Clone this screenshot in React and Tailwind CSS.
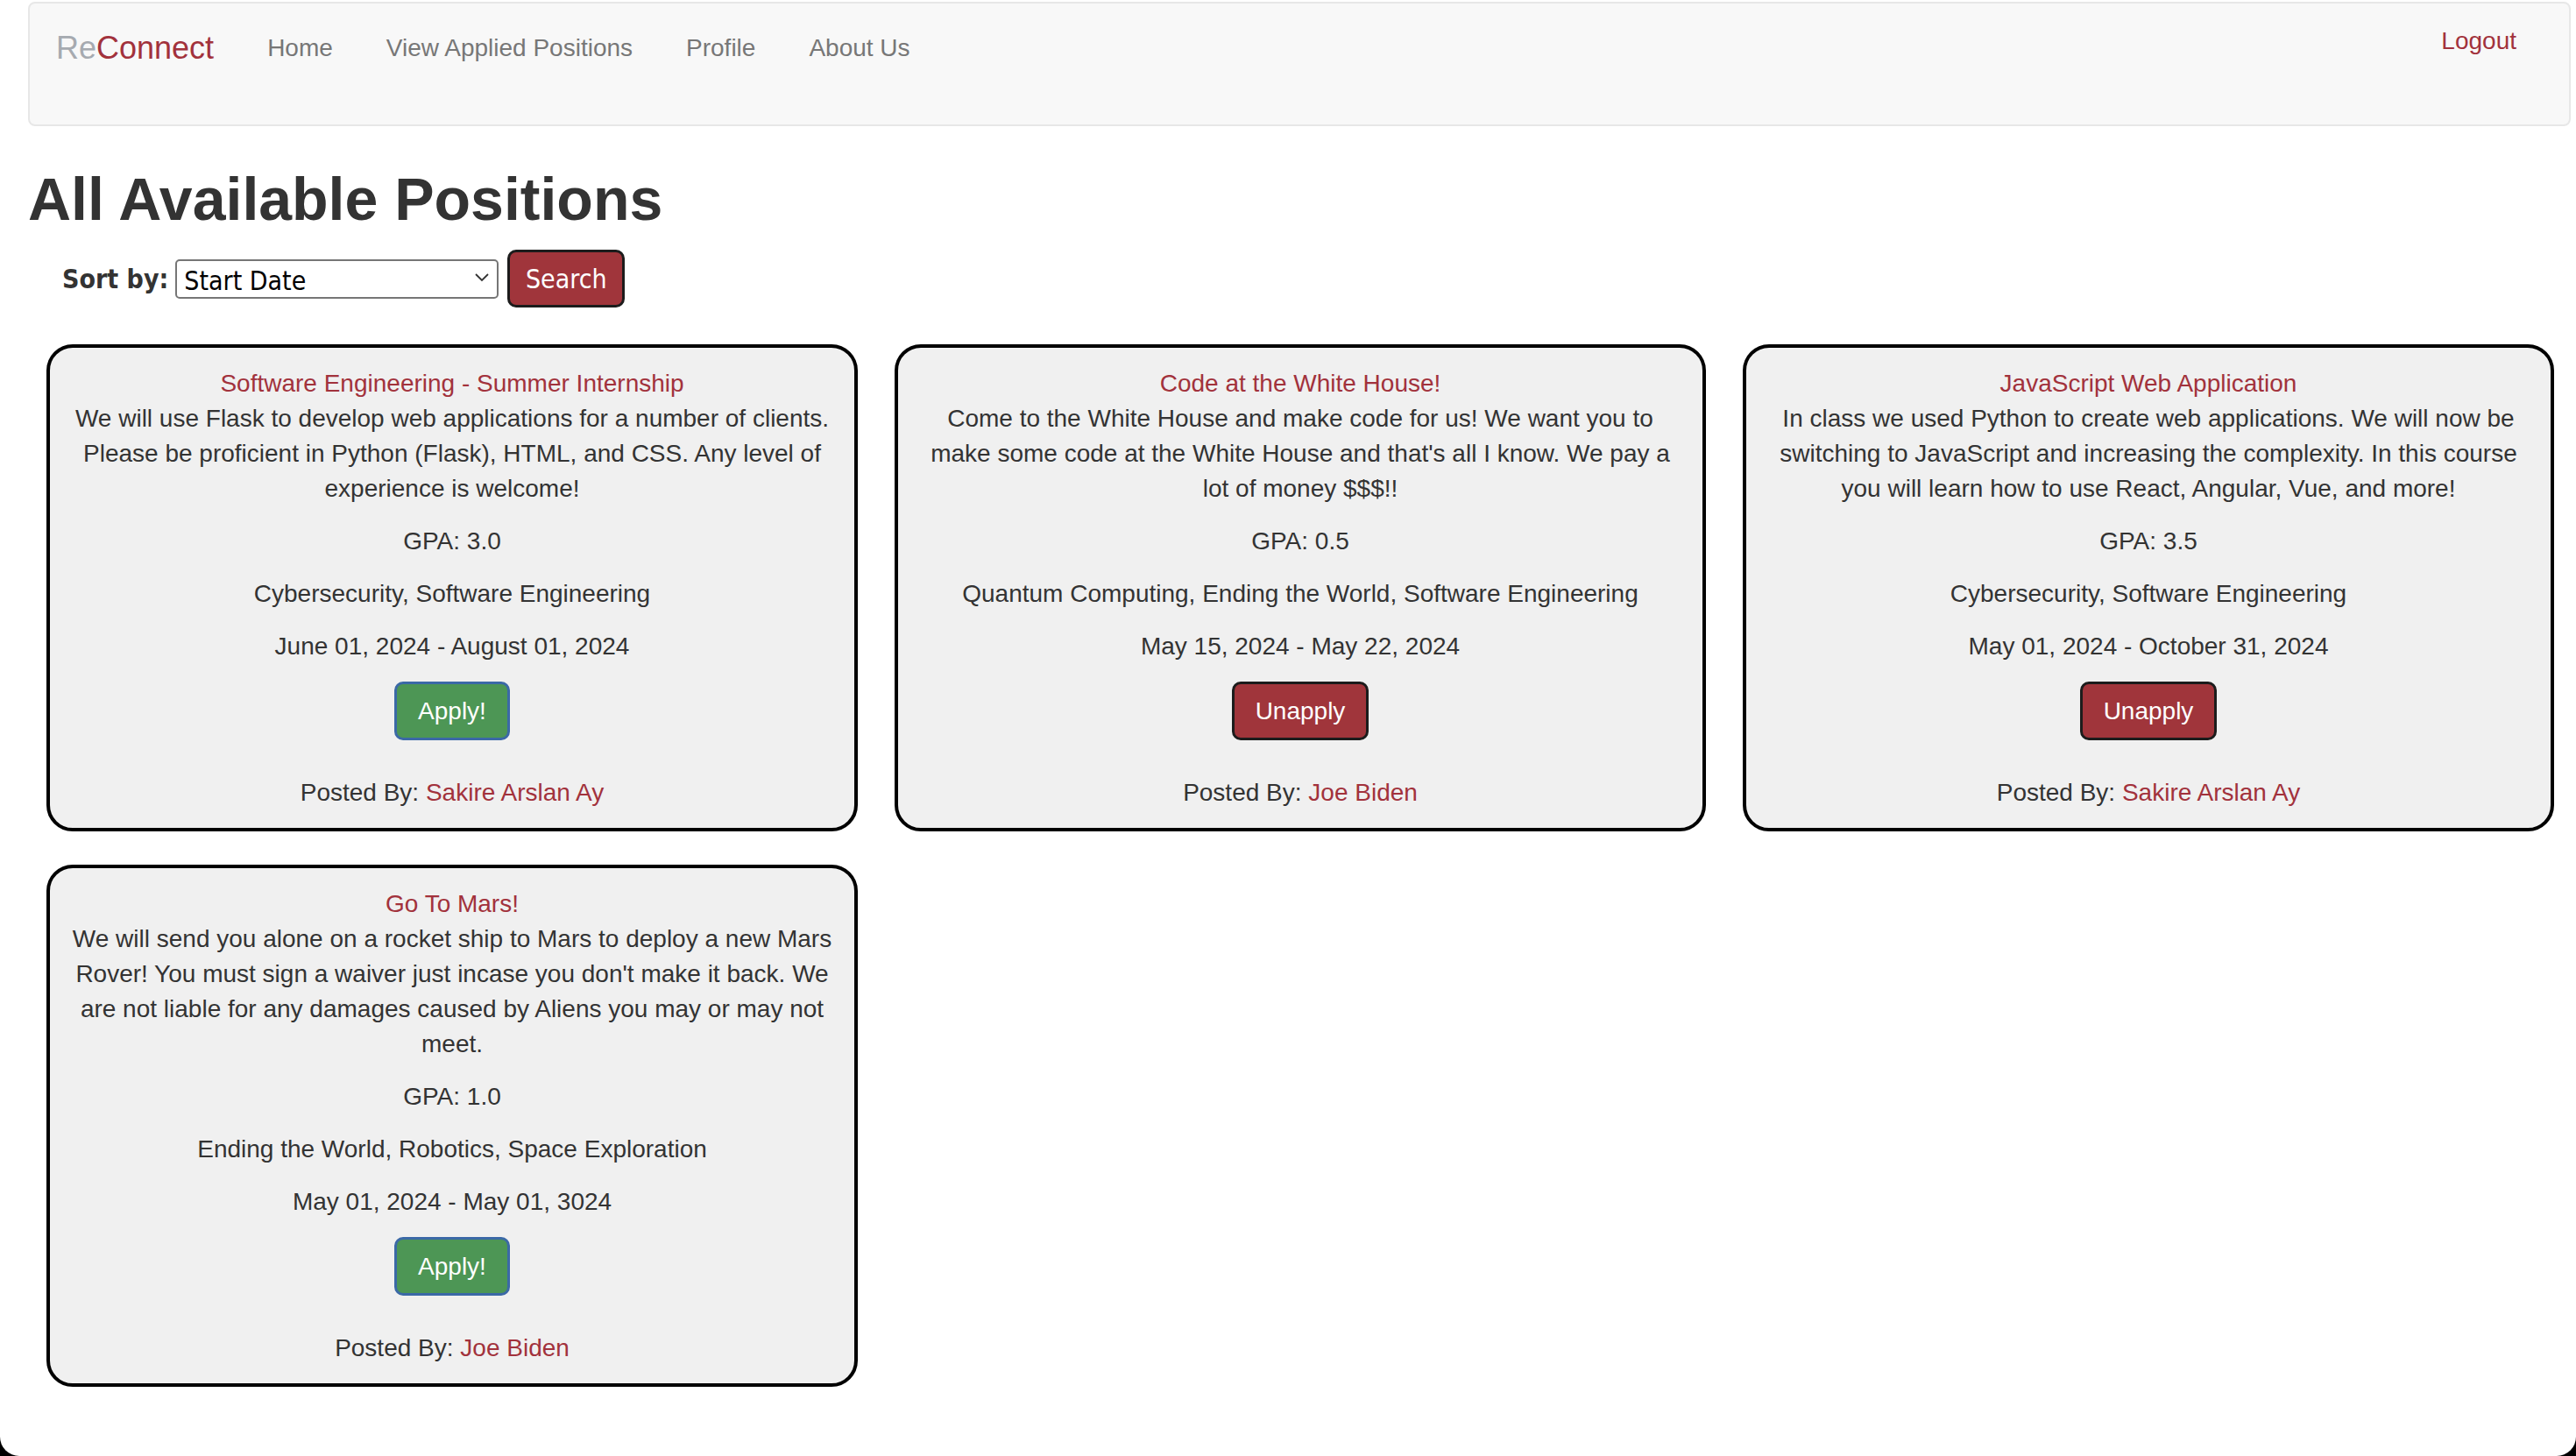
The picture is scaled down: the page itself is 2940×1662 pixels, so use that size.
import { useState } from 'react'

const positions = [
  {
    title: 'Software Engineering - Summer Internship',
    desc: 'We will use Flask to develop web applications for a number of clients. Please be proficient in Python (Flask), HTML, and CSS. Any level of experience is welcome!',
    gpa: '3.0',
    tags: 'Cybersecurity, Software Engineering',
    dates: 'June 01, 2024 - August 01, 2024',
    applied: false,
    poster: 'Sakire Arslan Ay'
  },
  {
    title: 'Code at the White House!',
    desc: "Come to the White House and make code for us! We want you to make some code at the White House and that's all I know. We pay a lot of money $$$!!",
    gpa: '0.5',
    tags: 'Quantum Computing, Ending the World, Software Engineering',
    dates: 'May 15, 2024 - May 22, 2024',
    applied: true,
    poster: 'Joe Biden'
  },
  {
    title: 'JavaScript Web Application',
    desc: 'In class we used Python to create web applications. We will now be switching to JavaScript and increasing the complexity. In this course you will learn how to use React, Angular, Vue, and more!',
    gpa: '3.5',
    tags: 'Cybersecurity, Software Engineering',
    dates: 'May 01, 2024 - October 31, 2024',
    applied: true,
    poster: 'Sakire Arslan Ay'
  },
  {
    title: 'Go To Mars!',
    desc: "We will send you alone on a rocket ship to Mars to deploy a new Mars Rover! You must sign a waiver just incase you don't make it back. We are not liable for any damages caused by Aliens you may or may not meet.",
    gpa: '1.0',
    tags: 'Ending the World, Robotics, Space Exploration',
    dates: 'May 01, 2024 - May 01, 3024',
    applied: false,
    poster: 'Joe Biden'
  }
]

function PositionCard({ pos }) {
  return (
    <div className="bg-[#f0f0f0] border-[4px] border-black rounded-[30px] px-[24px] pt-[21px] pb-[20px] text-center text-[28px] leading-[40px] text-[#333]">
      <div className="text-[#a2323c]">{pos.title}</div>
      <p className="mb-[20px]">{pos.desc}</p>
      <p className="mb-[20px]">GPA: {pos.gpa}</p>
      <p className="mb-[20px]">{pos.tags}</p>
      <p className="mb-[20px]">{pos.dates}</p>
      <div className="flex justify-center">
        {pos.applied ? (
          <button className="h-[67px] px-[24px] bg-[#a0353b] border-[3px] border-[#1c1c1c] rounded-[10px] text-white text-[28px]">
            Unapply
          </button>
        ) : (
          <button className="h-[67px] px-[24px] bg-[#4d9655] border-[3px] border-[#3b69a6] rounded-[10px] text-white text-[28px]">
            Apply!
          </button>
        )}
      </div>
      <p className="mt-[40px]">
        Posted By: <span className="text-[#a2323c]">{pos.poster}</span>
      </p>
    </div>
  )
}

export default function App() {
  const [sort, setSort] = useState('start')

  return (
    <div className="w-[2940px] h-[1662px] bg-black font-['Liberation_Sans',Arial,sans-serif]">
      <div className="h-full bg-white rounded-b-[22px] overflow-hidden pt-[2px]">
        {/* navbar */}
        <nav className="ml-[32px] mr-[6px] h-[142px] bg-[#f8f8f8] border-2 border-[#e7e7e7] rounded-[8px] flex items-start justify-between">
          <div className="flex items-center gap-[61px] pl-[30px] pt-[31px] h-[40px] box-content">
            <a className="text-[36px] leading-[40px]">
              <span className="text-[#a6aab0]">Re</span>
              <span className="text-[#a2323c]">Connect</span>
            </a>
            <a className="text-[28px] leading-[40px] text-[#777]">Home</a>
            <a className="text-[28px] leading-[40px] text-[#777]">View Applied Positions</a>
            <a className="text-[28px] leading-[40px] text-[#777]">Profile</a>
            <a className="text-[28px] leading-[40px] text-[#777]">About Us</a>
          </div>
          <a className="text-[28px] leading-[40px] text-[#a2323c] mt-[23px] mr-[60px]">Logout</a>
        </nav>

        <h1 className="ml-[32px] mt-[46px] text-[68px] leading-[75px] font-bold text-[#333]">All Available Positions</h1>

        <div className="mt-[20px] ml-[71px] h-[66px] flex items-center font-['DejaVu_Sans_Condensed','DejaVu_Sans',sans-serif] text-[#333]">
          <label className="text-[30px] font-bold mr-[8px]">Sort by:</label>
          <div className="relative">
            <select
              value={sort}
              onChange={(e) => setSort(e.target.value)}
              className="appearance-none w-[369px] h-[45px] pl-[8px] bg-white border-2 border-[#767676] rounded-[5px] text-[30px] text-black outline-none"
            >
              <option value="start">Start Date</option>
              <option value="end">End Date</option>
              <option value="gpa">GPA</option>
            </select>
            <svg className="absolute right-[10px] top-[14px] pointer-events-none" width="18" height="14" viewBox="0 0 18 14">
              <path d="M2 3l7 7 7-7" fill="none" stroke="#333" strokeWidth="1.8" />
            </svg>
          </div>
          <button className="ml-[10px] w-[134px] h-[66px] bg-[#a0353b] border-[3px] border-[#1c1c1c] rounded-[10px] text-white text-[30px]">
            Search
          </button>
        </div>

        <div className="mt-[42px] ml-[53px] w-[2862px] grid grid-cols-3 gap-x-[42px] gap-y-[38px] items-start">
          {positions.map((p) => (
            <PositionCard key={p.title} pos={p} />
          ))}
        </div>
      </div>
    </div>
  )
}
